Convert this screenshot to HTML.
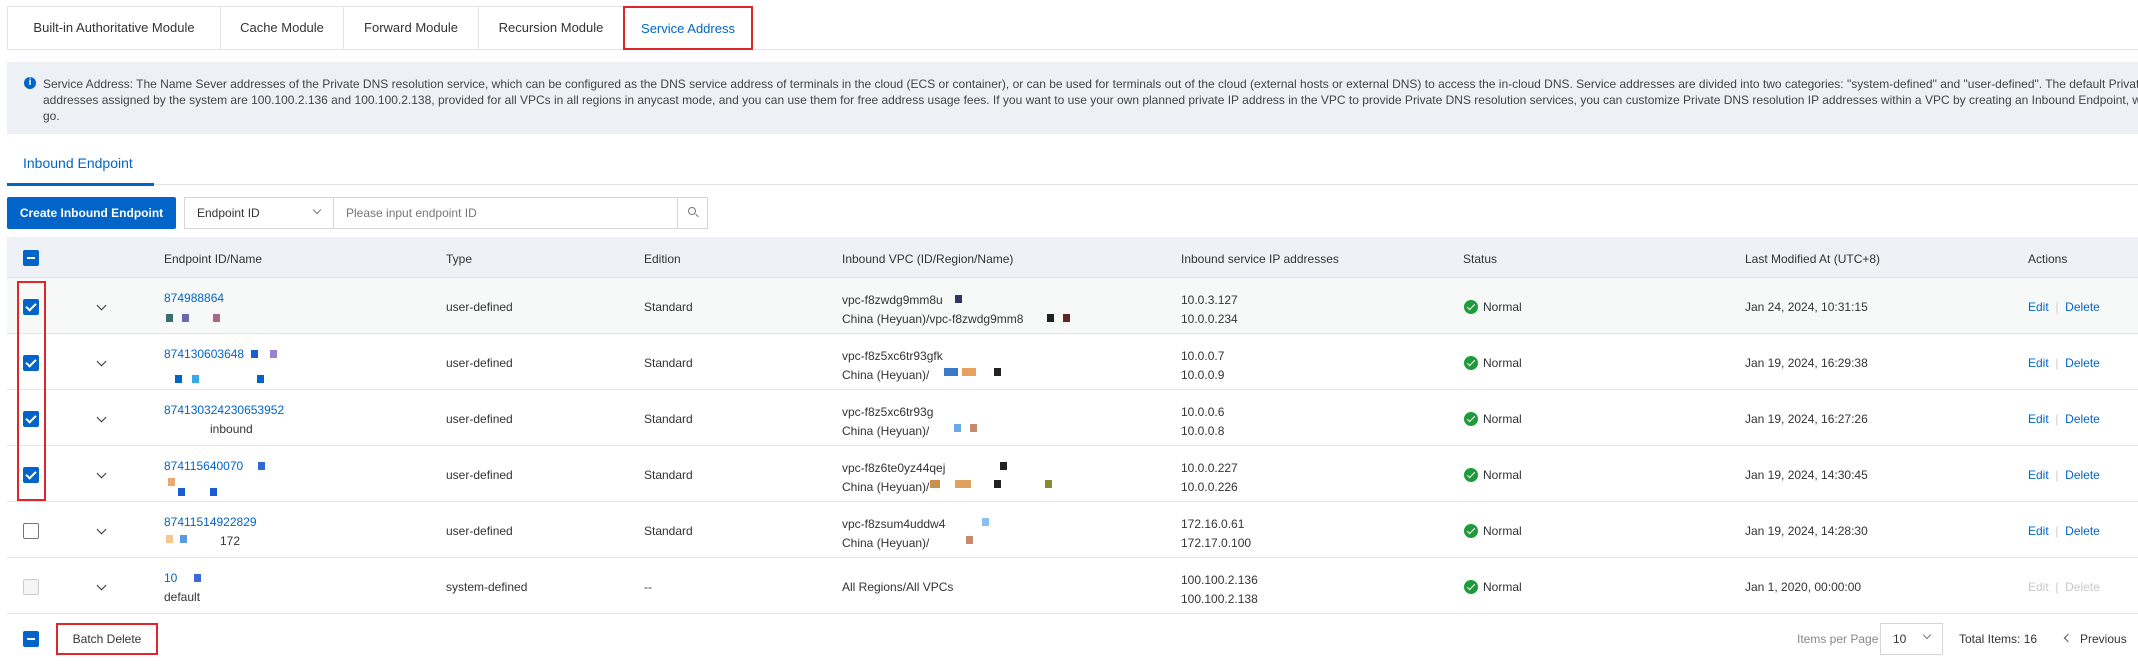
<!DOCTYPE html>
<html><head><meta charset="utf-8"><style>
*{box-sizing:border-box;margin:0;padding:0}
body{width:2138px;height:665px;position:relative;background:#fff;font-family:"Liberation Sans",sans-serif;font-size:12px;color:#333;overflow:hidden}
.a{position:absolute;white-space:nowrap}
.tab{position:absolute;top:6px;height:44px;border:1px solid #e3e3e3;line-height:42px;text-align:center;font-size:13px;color:#333;background:#fff}
.cb{position:absolute;width:16px;height:16px;border-radius:2px}
.on{background:#0064c8}
.on:after{content:"";position:absolute;left:5px;top:2px;width:4px;height:8px;border:solid #fff;border-width:0 2px 2px 0;transform:rotate(45deg)}
.off{border:1px solid #777;background:#fff}
.dis{border:1px solid #ccc;background:#f5f5f5}
.ind{background:#0064c8}
.ind:after{content:"";position:absolute;left:4px;top:7px;width:8px;height:2px;background:#fff}
.row{position:absolute;left:7px;width:2131px;height:56px;border-bottom:1px solid #e5e5e5}
.chev{position:absolute;width:7px;height:7px;border:solid #333;border-width:0 1.5px 1.5px 0;transform:rotate(45deg)}
.ok{position:absolute;width:14px;height:14px;border-radius:50%;background:#1e9b3a}
.ok:after{content:"";position:absolute;left:5px;top:2px;width:3px;height:7px;border:solid #fff;border-width:0 1.5px 1.5px 0;transform:rotate(45deg)}
.blue{color:#0064c8}
.sq{position:absolute;width:7px;height:8px}
</style></head><body>
<div style="position:absolute;left:7px;top:49px;width:2131px;border-top:1px solid #e3e3e3"></div>
<div class="tab" style="left:7px;width:214px">Built-in Authoritative Module</div>
<div class="tab" style="left:220px;width:124px">Cache Module</div>
<div class="tab" style="left:343px;width:136px">Forward Module</div>
<div class="tab" style="left:478px;width:146px">Recursion Module</div>
<div class="tab" style="left:623px;width:130px;color:#0064c8;border:2px solid #e0262b">Service Address</div>

<div style="position:absolute;left:7px;top:62px;width:2131px;height:72px;background:#edf1f6"></div>
<div class="a" style="left:24px;top:77px;width:12px;height:12px;border-radius:50%;background:#0064c8;color:#fff;font-size:10px;font-weight:bold;text-align:center;line-height:12px">i</div>
<div class="a" style="left:43px;top:76px;line-height:16px;color:#444">Service Address: The Name Sever addresses of the Private DNS resolution service, which can be configured as the DNS service address of terminals in the cloud (ECS or container), or can be used for terminals out of the cloud (external hosts or external DNS) to access the in-cloud DNS. Service addresses are divided into two categories: "system-defined" and "user-defined". The default Private DNS<br>addresses assigned by the system are 100.100.2.136 and 100.100.2.138, provided for all VPCs in all regions in anycast mode, and you can use them for free address usage fees. If you want to use your own planned private IP address in the VPC to provide Private DNS resolution services, you can customize Private DNS resolution IP addresses within a VPC by creating an Inbound Endpoint, which ne<br>go.</div>

<div class="a" style="left:23px;top:155px;font-size:14px;color:#0064c8">Inbound Endpoint</div>
<div style="position:absolute;left:7px;top:184px;width:2131px;border-top:1px solid #e3e3e3"></div>
<div style="position:absolute;left:7px;top:183px;width:147px;height:3px;background:#0064c8"></div>

<div class="a" style="left:7px;top:197px;width:169px;height:32px;background:#0064c8;color:#fff;font-weight:bold;line-height:32px;text-align:center;border-radius:2px">Create Inbound Endpoint</div>
<div class="a" style="left:184px;top:197px;width:524px;height:32px;border:1px solid #d5d5d5"></div>
<div class="a" style="left:333px;top:197px;height:32px;border-left:1px solid #d5d5d5"></div>
<div class="a" style="left:677px;top:197px;height:32px;border-left:1px solid #d5d5d5"></div>
<div class="a" style="left:197px;top:206px;color:#333">Endpoint ID</div>
<div class="chev" style="left:314px;top:207px;border-color:#777;width:6px;height:6px;border-width:0 1px 1px 0"></div>
<div class="a" style="left:346px;top:206px;color:#777">Please input endpoint ID</div>
<div class="a" style="left:688px;top:207px;width:8px;height:8px;border:1px solid #777;border-radius:50%"></div>
<div class="a" style="left:695px;top:215px;width:4px;border-top:1px solid #777;transform:rotate(45deg)"></div>

<div style="position:absolute;left:7px;top:237px;width:2131px;height:41px;background:#eef1f5;border-bottom:1px solid #e2e2e2"></div>
<div class="cb ind" style="left:23px;top:250px"></div>
<div class="a" style="left:164px;top:252px">Endpoint ID/Name</div>
<div class="a" style="left:446px;top:252px">Type</div>
<div class="a" style="left:644px;top:252px">Edition</div>
<div class="a" style="left:842px;top:252px">Inbound VPC (ID/Region/Name)</div>
<div class="a" style="left:1181px;top:252px">Inbound service IP addresses</div>
<div class="a" style="left:1463px;top:252px">Status</div>
<div class="a" style="left:1745px;top:252px">Last Modified At (UTC+8)</div>
<div class="a" style="left:2028px;top:252px">Actions</div>

<div class="row" style="top:278px;background:#f7f9f9"></div>
<div class="row" style="top:334px"></div>
<div class="row" style="top:390px"></div>
<div class="row" style="top:446px"></div>
<div class="row" style="top:502px"></div>
<div class="row" style="top:558px"></div>

<div class="cb on" style="left:23px;top:299px"></div>
<div class="cb on" style="left:23px;top:355px"></div>
<div class="cb on" style="left:23px;top:411px"></div>
<div class="cb on" style="left:23px;top:467px"></div>
<div class="cb off" style="left:23px;top:523px"></div>
<div class="cb dis" style="left:23px;top:579px"></div>
<div class="a" style="left:17px;top:281px;width:29px;height:220px;border:2px solid #e0262b"></div>

<div class="chev" style="left:98px;top:302px"></div>
<div class="chev" style="left:98px;top:358px"></div>
<div class="chev" style="left:98px;top:414px"></div>
<div class="chev" style="left:98px;top:470px"></div>
<div class="chev" style="left:98px;top:526px"></div>
<div class="chev" style="left:98px;top:582px"></div>

<div class="a blue" style="left:164px;top:291px">874988864</div>
<div class="sq" style="left:166px;top:314px;background:#3a6e6e"></div><div class="sq" style="left:182px;top:314px;background:#6a6aaa"></div><div class="sq" style="left:213px;top:314px;background:#aa6688"></div>
<div class="a blue" style="left:164px;top:347px">874130603648</div>
<div class="sq" style="left:251px;top:350px;background:#1a5fd0"></div><div class="sq" style="left:270px;top:350px;background:#9b7fd0"></div><div class="sq" style="left:175px;top:375px;background:#0064c8"></div><div class="sq" style="left:192px;top:375px;background:#38a8e8"></div><div class="sq" style="left:257px;top:375px;background:#0064c8"></div>
<div class="a blue" style="left:164px;top:403px">874130324230653952</div>
<div class="a" style="left:210px;top:422px;color:#333">inbound</div>
<div class="a blue" style="left:164px;top:459px">874115640070</div>
<div class="sq" style="left:258px;top:462px;background:#2b6bd6"></div><div class="sq" style="left:168px;top:478px;background:#e8a870"></div><div class="sq" style="left:178px;top:488px;background:#1a5fd0"></div><div class="sq" style="left:210px;top:488px;background:#1a5fd0"></div>
<div class="a blue" style="left:164px;top:515px">87411514922829</div>
<div class="sq" style="left:166px;top:535px;background:#f5c890"></div><div class="sq" style="left:180px;top:535px;background:#5a9ae0"></div>
<div class="a" style="left:220px;top:534px">172</div>
<div class="a blue" style="left:164px;top:571px">10</div><div class="sq" style="left:194px;top:574px;background:#3a6ad6"></div>
<div class="a" style="left:164px;top:590px">default</div>

<div class="a" style="left:446px;top:300px">user-defined</div>
<div class="a" style="left:446px;top:356px">user-defined</div>
<div class="a" style="left:446px;top:412px">user-defined</div>
<div class="a" style="left:446px;top:468px">user-defined</div>
<div class="a" style="left:446px;top:524px">user-defined</div>
<div class="a" style="left:446px;top:580px">system-defined</div>
<div class="a" style="left:644px;top:300px">Standard</div>
<div class="a" style="left:644px;top:356px">Standard</div>
<div class="a" style="left:644px;top:412px">Standard</div>
<div class="a" style="left:644px;top:468px">Standard</div>
<div class="a" style="left:644px;top:524px">Standard</div>
<div class="a" style="left:644px;top:580px">--</div>

<div class="a" style="left:842px;top:291px;line-height:19px">vpc-f8zwdg9mm8u<br>China (Heyuan)/vpc-f8zwdg9mm8</div>
<div class="sq" style="left:955px;top:295px;background:#333366"></div><div class="sq" style="left:1047px;top:314px;background:#222"></div><div class="sq" style="left:1063px;top:314px;background:#662222"></div>
<div class="a" style="left:842px;top:347px;line-height:19px">vpc-f8z5xc6tr93gfk<br>China (Heyuan)/</div>
<div class="sq" style="left:944px;top:368px;background:#3a78c8;width:14px"></div><div class="sq" style="left:962px;top:368px;background:#e8a060;width:14px"></div><div class="sq" style="left:994px;top:368px;background:#222"></div>
<div class="a" style="left:842px;top:403px;line-height:19px">vpc-f8z5xc6tr93g<br>China (Heyuan)/</div>
<div class="sq" style="left:954px;top:424px;background:#6aaae8"></div><div class="sq" style="left:970px;top:424px;background:#c8886a"></div>
<div class="a" style="left:842px;top:459px;line-height:19px">vpc-f8z6te0yz44qej<br>China (Heyuan)/</div>
<div class="sq" style="left:1000px;top:462px;background:#222"></div><div class="sq" style="left:930px;top:480px;background:#c89050;width:10px"></div><div class="sq" style="left:955px;top:480px;background:#e0a060;width:16px"></div><div class="sq" style="left:994px;top:480px;background:#222"></div><div class="sq" style="left:1045px;top:480px;background:#8a8a30"></div>
<div class="a" style="left:842px;top:515px;line-height:19px">vpc-f8zsum4uddw4<br>China (Heyuan)/</div>
<div class="sq" style="left:982px;top:518px;background:#8ac0f0"></div><div class="sq" style="left:966px;top:536px;background:#c8886a"></div>
<div class="a" style="left:842px;top:580px">All Regions/All VPCs</div>

<div class="a" style="left:1181px;top:291px;line-height:19px">10.0.3.127<br>10.0.0.234</div>
<div class="a" style="left:1181px;top:347px;line-height:19px">10.0.0.7<br>10.0.0.9</div>
<div class="a" style="left:1181px;top:403px;line-height:19px">10.0.0.6<br>10.0.0.8</div>
<div class="a" style="left:1181px;top:459px;line-height:19px">10.0.0.227<br>10.0.0.226</div>
<div class="a" style="left:1181px;top:515px;line-height:19px">172.16.0.61<br>172.17.0.100</div>
<div class="a" style="left:1181px;top:571px;line-height:19px">100.100.2.136<br>100.100.2.138</div>

<div class="ok" style="left:1464px;top:300px"></div><div class="a" style="left:1483px;top:300px">Normal</div>
<div class="ok" style="left:1464px;top:356px"></div><div class="a" style="left:1483px;top:356px">Normal</div>
<div class="ok" style="left:1464px;top:412px"></div><div class="a" style="left:1483px;top:412px">Normal</div>
<div class="ok" style="left:1464px;top:468px"></div><div class="a" style="left:1483px;top:468px">Normal</div>
<div class="ok" style="left:1464px;top:524px"></div><div class="a" style="left:1483px;top:524px">Normal</div>
<div class="ok" style="left:1464px;top:580px"></div><div class="a" style="left:1483px;top:580px">Normal</div>

<div class="a" style="left:1745px;top:300px">Jan 24, 2024, 10:31:15</div>
<div class="a" style="left:1745px;top:356px">Jan 19, 2024, 16:29:38</div>
<div class="a" style="left:1745px;top:412px">Jan 19, 2024, 16:27:26</div>
<div class="a" style="left:1745px;top:468px">Jan 19, 2024, 14:30:45</div>
<div class="a" style="left:1745px;top:524px">Jan 19, 2024, 14:28:30</div>
<div class="a" style="left:1745px;top:580px">Jan 1, 2020, 00:00:00</div>

<div class="a blue" style="left:2028px;top:300px">Edit <span style="color:#ccc">&nbsp;|&nbsp;</span> Delete</div>
<div class="a blue" style="left:2028px;top:356px">Edit <span style="color:#ccc">&nbsp;|&nbsp;</span> Delete</div>
<div class="a blue" style="left:2028px;top:412px">Edit <span style="color:#ccc">&nbsp;|&nbsp;</span> Delete</div>
<div class="a blue" style="left:2028px;top:468px">Edit <span style="color:#ccc">&nbsp;|&nbsp;</span> Delete</div>
<div class="a blue" style="left:2028px;top:524px">Edit <span style="color:#ccc">&nbsp;|&nbsp;</span> Delete</div>
<div class="a" style="left:2028px;top:580px;color:#c8c8c8">Edit &nbsp;|&nbsp; Delete</div>

<div class="cb ind" style="left:23px;top:631px"></div>
<div class="a" style="left:56px;top:623px;width:102px;height:32px;border:2px solid #e0262b;text-align:center;line-height:28px;color:#333">Batch Delete</div>
<div class="a" style="left:1797px;top:632px;color:#888">Items per Page</div>
<div class="a" style="left:1880px;top:623px;width:63px;height:32px;border:1px solid #d5d5d5"></div>
<div class="a" style="left:1893px;top:632px">10</div>
<div class="chev" style="left:1924px;top:632px;border-color:#777;width:6px;height:6px;border-width:0 1px 1px 0"></div>
<div class="a" style="left:1959px;top:632px">Total Items: 16</div>
<div class="a" style="left:2065px;top:635px;width:6px;height:6px;border:solid #555;border-width:0 0 1px 1px;transform:rotate(45deg)"></div>
<div class="a" style="left:2080px;top:632px">Previous</div>
</body></html>
